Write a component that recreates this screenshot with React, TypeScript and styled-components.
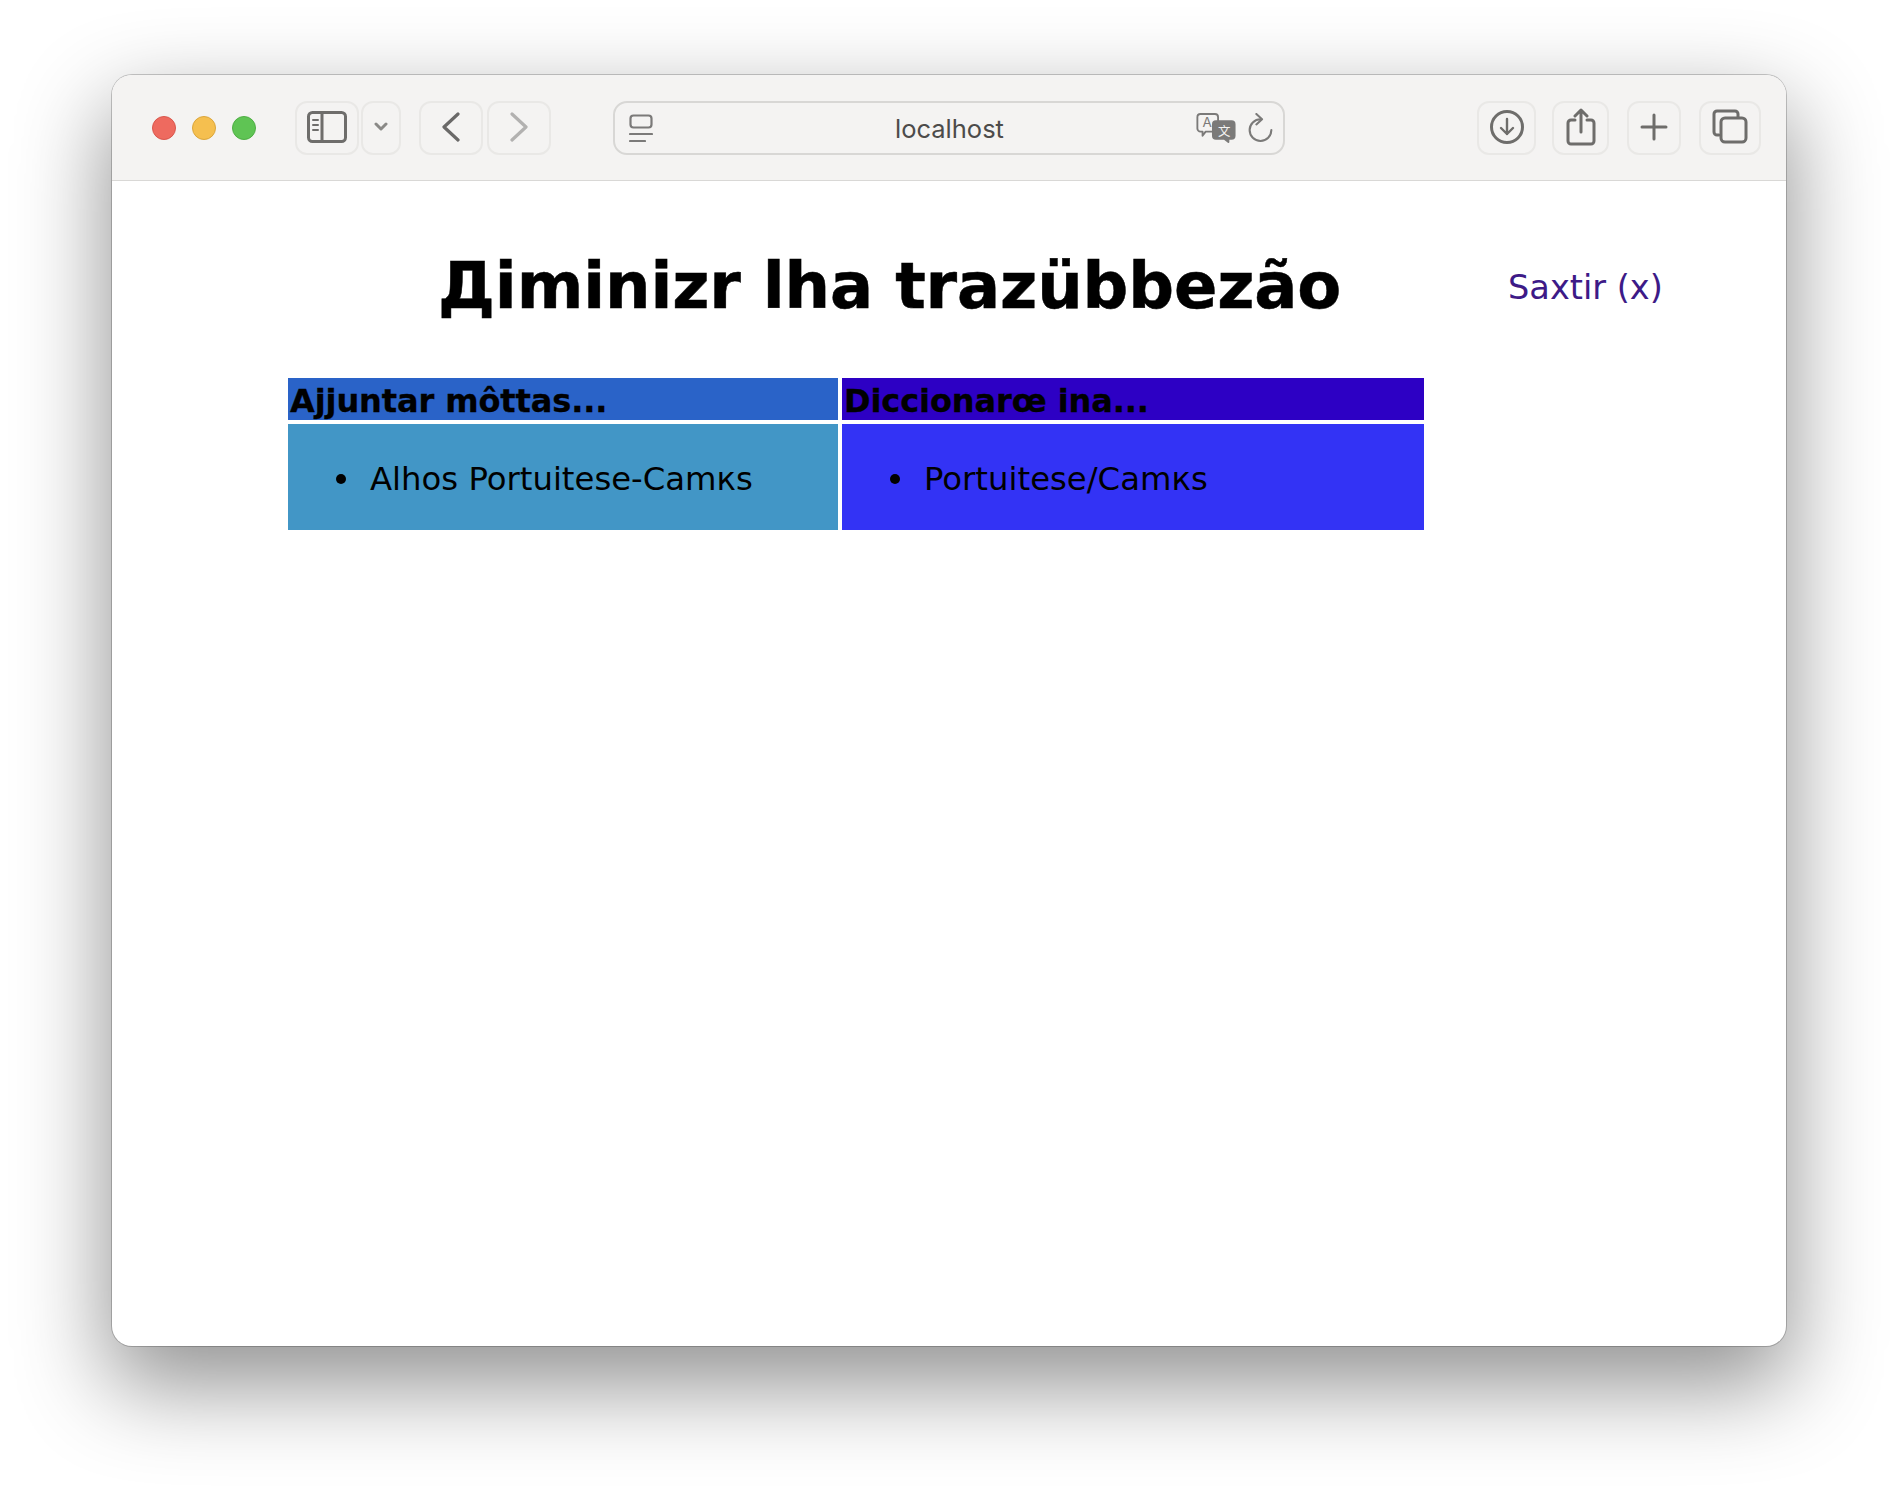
import React from 'react';
import styled, { createGlobalStyle } from 'styled-components';

const GlobalStyle = createGlobalStyle`
  html, body {
    margin: 0;
    padding: 0;
    background: #ffffff;
  }
  body {
    font-family: "DejaVu Sans", Verdana, sans-serif;
  }
`;

const Page = styled.div`
  width: 1898px;
  height: 1494px;
  padding: 75px 112px 148px;
  box-sizing: border-box;
  overflow: hidden;
`;

const Window = styled.div`
  height: 100%;
  display: flex;
  flex-direction: column;
  background: #ffffff;
  border-radius: 20px;
  box-shadow: 0 0 0 1px rgba(0, 0, 0, 0.2), 0 36px 90px 4px rgba(0, 0, 0, 0.43);
  overflow: hidden;
`;

const Toolbar = styled.div`
  height: 106px;
  flex: none;
  display: flex;
  align-items: center;
  padding-left: 40px;
  box-sizing: border-box;
  background: #f4f3f2;
  border-bottom: 1px solid #d9d8d6;
`;

const Lights = styled.div`
  display: flex;
  gap: 16px;
  margin-right: 39px;
`;

const Light = styled.span<{ $color: string; $edge: string }>`
  width: 24px;
  height: 24px;
  box-sizing: border-box;
  border-radius: 50%;
  background: ${p => p.$color};
  border: 1px solid ${p => p.$edge};
`;

const ToolButton = styled.div<{ $w: number; $ml?: number }>`
  width: ${p => p.$w}px;
  height: 54px;
  margin-left: ${p => p.$ml || 0}px;
  padding-bottom: 2px;
  flex: none;
  display: flex;
  align-items: center;
  justify-content: center;
  box-sizing: border-box;
  border: 2px solid #e9e8e6;
  border-radius: 12px;
`;

const UrlBar = styled.div`
  width: 672px;
  height: 54px;
  margin-left: 62px;
  margin-right: 192px;
  padding: 0 10px 0 14px;
  flex: none;
  display: flex;
  align-items: center;
  box-sizing: border-box;
  border: 2px solid #d8d7d5;
  border-radius: 14px;
`;

const UrlText = styled.span`
  flex: 1;
  padding: 2px 0 0 50px;
  text-align: center;
  font-family: Inter, "Liberation Sans", sans-serif;
  font-size: 25.5px;
  color: #4c4b4a;
`;

const Content = styled.div`
  flex: 1;
  padding: 0 0 0 176px;
`;

const TitleRow = styled.div`
  display: flex;
  align-items: center;
  height: 197px;
  padding-top: 12px;
  box-sizing: border-box;
`;

const Title = styled.h1`
  margin: 0 0 0 150px;
  width: 1070px;
  font-size: 64px;
  font-weight: 700;
  letter-spacing: -0.15px;
  -webkit-text-stroke: 0.5px #000000;
  color: #000000;
  line-height: 1;
  white-space: nowrap;
`;

const CloseLink = styled.a`
  padding-top: 3px;
  font-size: 33.6px;
  color: #3d1a87;
  text-decoration: none;
  white-space: nowrap;
`;

const PanelGrid = styled.div`
  display: grid;
  grid-template-columns: 550px 582px;
  grid-template-rows: 42px 106px;
  gap: 4px;
`;

const PanelHead = styled.div<{ $bg: string }>`
  background: ${p => p.$bg};
  padding-left: 2px;
  font-size: 32px;
  font-weight: 700;
  letter-spacing: -0.1px;
  -webkit-text-stroke: 0.3px #000000;
  line-height: 46px;
  color: #000000;
  white-space: nowrap;
`;

const PanelBody = styled.ul<{ $bg: string }>`
  margin: 0;
  padding: 4px 0 0 48px;
  display: flex;
  flex-direction: column;
  justify-content: center;
  list-style: none;
  background: ${p => p.$bg};
`;

const PanelItem = styled.li`
  display: flex;
  align-items: center;
  gap: 24px;
  font-size: 32.3px;
  color: #000000;
  white-space: nowrap;

  &::before {
    content: '';
    width: 10px;
    height: 10px;
    flex: none;
    border-radius: 50%;
    background: #000000;
  }
`;

const Icon = styled.svg`
  display: block;
  flex: none;
  fill: none;
  stroke-linecap: round;
  stroke-linejoin: round;
`;

const App: React.FC = () => (
  <>
    <GlobalStyle />
    <Page>
      <Window>
        <Toolbar>
          <Lights>
            <Light $color="#ee6a5f" $edge="#d9574d" />
            <Light $color="#f5bf4f" $edge="#dba63c" />
            <Light $color="#5fc454" $edge="#4fae45" />
          </Lights>
          <ToolButton $w={64}>
            <Icon width="40" height="32" viewBox="0 0 40 32" stroke="#6e6d6b" strokeWidth="3">
              <rect x="1.5" y="1.5" width="37" height="29" rx="4" />
              <path d="M15 2v28" />
              <path d="M6 9h5M6 14h5M6 19h5" strokeWidth="2" />
            </Icon>
          </ToolButton>
          <ToolButton $w={40} $ml={2}>
            <Icon width="14" height="9" viewBox="0 0 14 9" stroke="#8a8987" strokeWidth="3">
              <path d="M2 2l5 5 5-5" />
            </Icon>
          </ToolButton>
          <ToolButton $w={64} $ml={18}>
            <Icon width="18" height="30" viewBox="0 0 18 30" stroke="#6a6968" strokeWidth="3.2">
              <path d="M16 2L2 15l14 13" />
            </Icon>
          </ToolButton>
          <ToolButton $w={64} $ml={4}>
            <Icon width="18" height="30" viewBox="0 0 18 30" stroke="#b2b1b0" strokeWidth="3.2">
              <path d="M2 2l14 13L2 28" />
            </Icon>
          </ToolButton>
          <UrlBar>
            <Icon width="24" height="28" viewBox="0 0 24 28" stroke="#7b7a79" strokeWidth="2.2">
              <rect x="1.5" y="1.5" width="21" height="12" rx="3" />
              <path d="M1 20h22M1 27h15" />
            </Icon>
            <UrlText>localhost</UrlText>
            <Icon width="40" height="30" viewBox="0 0 38 29" stroke="#7b7a79" strokeWidth="1.8">
              <path d="M4 1h14a3 3 0 0 1 3 3v11a3 3 0 0 1-3 3H9l-3 4v-4H4a3 3 0 0 1-3-3V4a3 3 0 0 1 3-3z" />
              <text x="6" y="14" fontSize="13" fontFamily="Inter, sans-serif" fill="#7b7a79" stroke="none">A</text>
              <path d="M19 8h15a3 3 0 0 1 3 3v11a3 3 0 0 1-3 3h-3v3l-4-3h-8a3 3 0 0 1-3-3V11a3 3 0 0 1 3-3z" fill="#7b7a79" stroke="#7b7a79" />
              <text x="21" y="22" fontSize="12" fontFamily="'Noto Sans CJK SC', sans-serif" fill="#f4f3f2" stroke="none">文</text>
            </Icon>
            <Icon width="25" height="29" viewBox="0 0 24 28" stroke="#7b7a79" strokeWidth="2" style={{ marginLeft: 12 }}>
              <path d="M12 6a10.5 10.5 0 1 0 10.5 10.5" />
              <path d="M8 1l5.5 5L8 11" />
            </Icon>
          </UrlBar>
          <ToolButton $w={59}>
            <Icon width="34" height="34" viewBox="0 0 34 34" stroke="#6e6d6b" strokeWidth="3">
              <circle cx="17" cy="17" r="15.5" />
              <path d="M17 9v15M11 18l6 6 6-6" strokeWidth="2.4" />
            </Icon>
          </ToolButton>
          <ToolButton $w={57} $ml={16}>
            <Icon width="30" height="38" viewBox="0 0 30 38" stroke="#6e6d6b" strokeWidth="3">
              <path d="M9 12H5a3 3 0 0 0-3 3v18a3 3 0 0 0 3 3h20a3 3 0 0 0 3-3V15a3 3 0 0 0-3-3h-4" />
              <path d="M15 2v22M9 8l6-6 6 6" />
            </Icon>
          </ToolButton>
          <ToolButton $w={54} $ml={18}>
            <Icon width="28" height="28" viewBox="0 0 28 28" stroke="#6e6d6b" strokeWidth="3">
              <path d="M14 2v24M2 14h24" />
            </Icon>
          </ToolButton>
          <ToolButton $w={62} $ml={18}>
            <Icon width="36" height="35" viewBox="0 0 36 35" stroke="#6e6d6b" strokeWidth="3">
              <path d="M7 26H5a3 3 0 0 1-3-3V5a3 3 0 0 1 3-3h18a3 3 0 0 1 3 3v3" />
              <rect x="9" y="9" width="25" height="24" rx="4" />
            </Icon>
          </ToolButton>
        </Toolbar>
        <Content>
          <TitleRow>
            <Title>Дiminizr lha trazübbezão</Title>
            <CloseLink href="#">Saxtir (x)</CloseLink>
          </TitleRow>
          <PanelGrid>
            <PanelHead $bg="#2a63c8">Ajjuntar môttas...</PanelHead>
            <PanelHead $bg="#2d00c4">Diccionarœ ina...</PanelHead>
            <PanelBody $bg="#4296c6">
              <PanelItem>Alhos Portuitese-Camкs</PanelItem>
            </PanelBody>
            <PanelBody $bg="#3333f5">
              <PanelItem>Portuitese/Camкs</PanelItem>
            </PanelBody>
          </PanelGrid>
        </Content>
      </Window>
    </Page>
  </>
);

export default App;
